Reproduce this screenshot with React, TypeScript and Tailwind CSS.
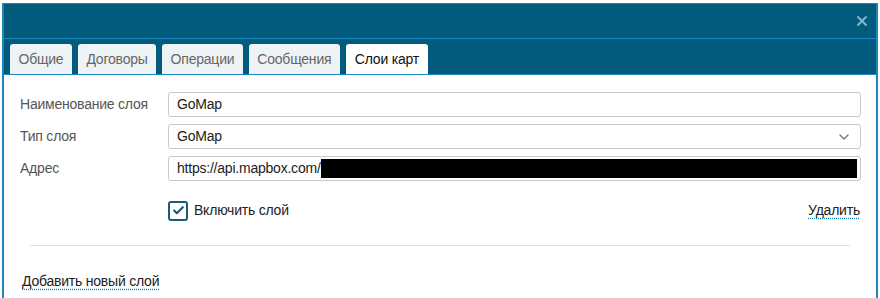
import { X, ChevronDown, Check } from "lucide-react";

const tabs = ["Общие", "Договоры", "Операции", "Сообщения", "Слои карт"];

export default function App() {
  return (
    <div
      className="h-[298px] w-[880px] overflow-hidden bg-white pt-[3px] pl-[2px] text-[14px] tracking-[-0.22px] [font-family:'Liberation_Sans',Arial,sans-serif]"
    >
      <div className="w-[876px] h-[295px] border-x-2 border-t border-[#1a88bd] bg-white">
        {/* Header */}
        <div className="h-[34px] bg-[#025b7c] flex items-center justify-end pr-[6px]">
          <X size={16} strokeWidth={3} className="text-[#7db7cf]" />
        </div>
        <div className="h-px bg-[#1a88bd]" />

        {/* Tabs */}
        <div className="h-[35px] bg-[#025b7c] flex items-end gap-[6px] pl-[6px]">
          {tabs.map((t, i) => (
            <div
              key={t}
              className={
                i === tabs.length - 1
                  ? "h-[30px] px-[9px] flex items-center rounded-t-[3px] bg-white text-[#111]"
                  : "h-[30px] px-[8.5px] flex items-center rounded-t-[3px] bg-[#eef3f6] text-[#666]"
              }
            >
              {t}
            </div>
          ))}
        </div>
        <div className="h-px bg-[#1a88bd]" />

        {/* Form */}
        <div className="pt-[17px] pl-[16px] pr-[15px]">
          <div className="flex flex-col gap-[7px]">
            <div className="flex items-center">
              <div className="w-[148px] text-[#555]">Наименование слоя</div>
              <div className="h-[25px] flex-1 border border-[#c8c8c8] rounded-[3px] flex items-center px-[8px] text-[#222]">GoMap</div>
            </div>
            <div className="flex items-center">
              <div className="w-[148px] text-[#555]">Тип слоя</div>
              <div className="h-[25px] flex-1 border border-[#c8c8c8] rounded-[3px] flex items-center justify-between px-[8px] text-[#222]">
                <span>GoMap</span>
                <ChevronDown size={16} strokeWidth={2} className="text-[#777]" />
              </div>
            </div>
            <div className="flex items-center">
              <div className="w-[148px] text-[#555]">Адрес</div>
              <div className="h-[25px] flex-1 border border-[#c8c8c8] rounded-[3px] flex items-center pl-[8px] pr-[3px] text-[#222]">
                <span>https://api.mapbox.com/</span>
                <div className="h-[19px] flex-1 bg-black" />
              </div>
            </div>
          </div>

          <div className="flex items-center justify-between pl-[148px] pt-[19px]">
            <div className="flex items-center gap-[6px]">
              <div className="w-[20px] h-[20px] border-2 border-[#1c5a78] rounded-[3px] flex items-center justify-center">
                <Check size={13} strokeWidth={4} className="text-[#1c5a78]" />
              </div>
              <span className="text-[#222]">Включить слой</span>
            </div>
            <span className="text-[#222] underline decoration-dotted decoration-[#1a88bd] underline-offset-[3px] mr-[1px]">Удалить</span>
          </div>

          <div className="mt-[24px] ml-[10px] mr-[11px] h-px bg-[#e0e0e0]" />

          <div className="pt-[25px] pl-[2px]">
            <span className="text-[#222] underline decoration-dotted decoration-[#1a88bd] underline-offset-[3px]">Добавить новый слой</span>
          </div>
        </div>
      </div>
    </div>
  );
}
